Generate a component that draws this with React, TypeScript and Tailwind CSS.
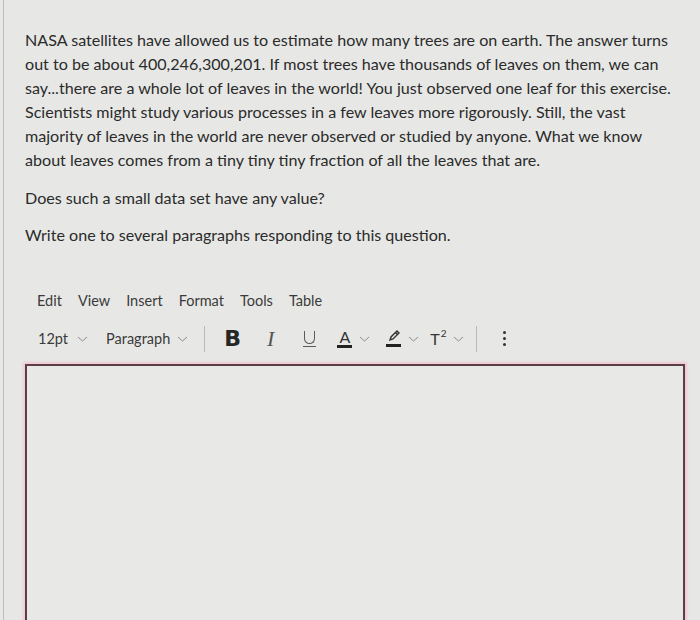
import React from 'react';

function Chevron({ className = 'ml-[7px]' }: { className?: string }) {
  return (
    <svg width="11" height="6" viewBox="0 0 11 6" fill="none" stroke="#8c8c8c" strokeWidth="1" className={className}>
      <path d="M1 1l4.5 4 4.5-4" />
    </svg>
  );
}

const lines = [
  'NASA satellites have allowed us to estimate how many trees are on earth. The answer turns',
  'out to be about 400,246,300,201. If most trees have thousands of leaves on them, we can',
  'say...there are a whole lot of leaves in the world! You just observed one leaf for this exercise.',
  'Scientists might study various processes in a few leaves more rigorously. Still, the vast',
  'majority of leaves in the world are never observed or studied by anyone. What we know',
  'about leaves comes from a tiny tiny tiny fraction of all the leaves that are.',
];

export default function App() {
  const menu = ['Edit', 'View', 'Insert', 'Format', 'Tools', 'Table'];
  return (
    <div
      className="w-[700px] h-[620px] overflow-hidden bg-[#e7e8e5] flex text-[#2b2b2b]"
      style={{ fontFamily: 'Lato, "Open Sans", sans-serif' }}
    >
      <div className="w-[3px] shrink-0" />
      <div className="w-[1px] shrink-0 bg-[#bdbdbb]" />
      <div className="flex-1 pl-[21px] pr-[15px] pt-[28px]">
        <p className="text-[16.1px] leading-[24px] whitespace-nowrap">
          {lines.map((l) => (
            <span key={l} className="block">{l}</span>
          ))}
        </p>
        <p className="text-[16.1px] leading-[24px] mt-[14px]">Does such a small data set have any value?</p>
        <p className="text-[16.1px] leading-[24px] mt-[13px]">Write one to several paragraphs responding to this question.</p>

        <div className="mt-[43px] ml-[12px] flex gap-[16px] text-[14.5px] text-[#3a3a3a]">
          {menu.map((m) => (
            <span key={m}>{m}</span>
          ))}
        </div>

        <div className="mt-[13px] ml-[13px] flex items-center h-[28px] text-[14.5px] text-[#3a3a3a]">
          <span className="flex items-center">12pt<Chevron className="ml-[9px]" /></span>
          <span className="flex items-center ml-[18px]">Paragraph<Chevron className="ml-[7px]" /></span>
          <span className="ml-[16px] w-[1px] h-[26px] bg-[#b9b9b9]" />
          <span className="ml-[19px] text-[22px] leading-[22px] font-bold text-[#262626]" style={{ fontFamily: '"DejaVu Sans", sans-serif' }}>B</span>
          <span className="ml-[26px] text-[22px] leading-[22px] italic text-[#555]" style={{ fontFamily: '"Liberation Serif", serif' }}>I</span>
          <span className="ml-[29px] flex flex-col items-center">
            <span className="w-[11px] h-[13px] border-x-[1.5px] border-b-[1.5px] border-[#5a5a5a] rounded-b-[6px]" />
            <span className="w-[13px] h-[1.5px] bg-[#5a5a5a] mt-[2px]" />
          </span>
          <span className="ml-[21px] flex items-center">
            <span className="flex flex-col items-center">
              <span className="text-[16px] leading-[15px] text-[#333]">A</span>
              <span className="w-[15px] h-[3px] bg-[#222] mt-[1px]" />
            </span>
            <Chevron className="ml-[7px]" />
          </span>
          <span className="ml-[16px] flex items-center">
            <span className="flex flex-col items-center">
              <svg width="15" height="13" viewBox="0 0 15 13" fill="none" stroke="#333" strokeWidth="1.4">
                <path d="M4 10l1-3 6-6 2 2-6 6-3 1z" />
                <path d="M9.5 2.5l2 2" />
              </svg>
              <span className="w-[15px] h-[3px] bg-[#222] mt-[1px]" />
            </span>
            <Chevron className="ml-[7px]" />
          </span>
          <span className="ml-[11px] flex items-center text-[16px] text-[#333]">
            T<sup className="text-[10px] -top-[6px] ml-[1px]">2</sup>
            <Chevron className="ml-[6px]" />
          </span>
          <span className="ml-[12px] w-[1px] h-[26px] bg-[#b9b9b9]" />
          <span className="ml-[26px] flex flex-col gap-[3px]">
            <span className="w-[3px] h-[3px] rounded-full bg-[#333]" />
            <span className="w-[3px] h-[3px] rounded-full bg-[#333]" />
            <span className="w-[3px] h-[3px] rounded-full bg-[#333]" />
          </span>
        </div>

        <div className="mt-[11px] h-[300px] border-2 border-[#5b3e48] shadow-[0_0_2px_2px_#f0c8d2] bg-[#e8e9e6]" />
      </div>
    </div>
  );
}
